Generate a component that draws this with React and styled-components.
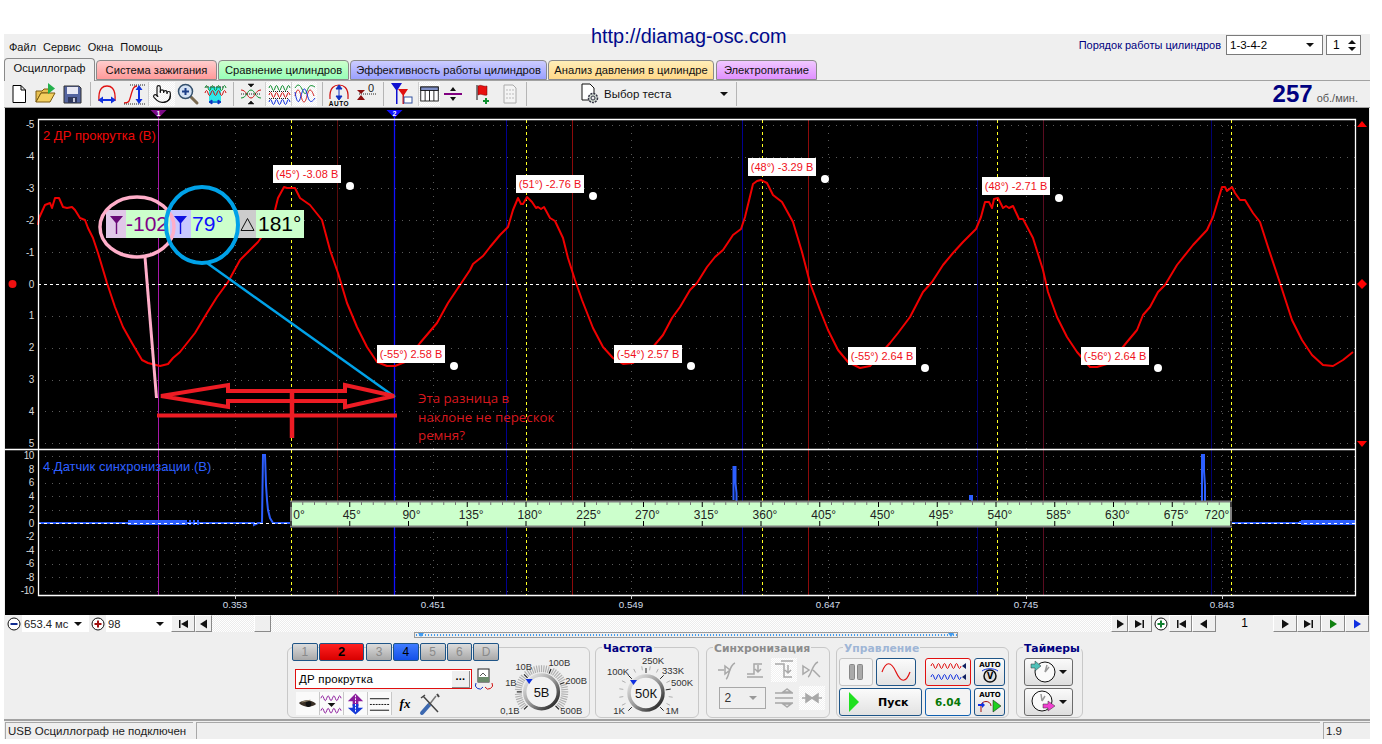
import React from 'react';
import styled, { createGlobalStyle } from 'styled-components';
import { Pointer } from 'lucide-react';

const GlobalStyle = createGlobalStyle`
  html, body {
    margin: 0;
    padding: 0;
    background: #fff;
  }
  body {
    font-family: "Liberation Sans", Arial, sans-serif;
    font-size: 12px;
    color: #000;
    overflow: hidden;
  }
`;

const FRAME = '#a2a2a2';
const NAVY = '#000080';
const BTN_EDGE = '#1f5587';

const Page = styled.div`
  position: relative;
  width: 1382px;
  height: 744px;
`;

const Url = styled.div`
  position: absolute;
  left: 591px;
  top: 24px;
  font-size: 19.9px;
  line-height: 24px;
  color: #000a8c;
  white-space: nowrap;
`;

const Window = styled.div`
  position: absolute;
  left: 4px;
  top: 34px;
  width: 1366px;
  height: 705px;
  background: #efefef;
  display: flex;
  flex-direction: column;
`;

const TopRow = styled.div`
  display: flex;
  justify-content: space-between;
  height: 24px;
  padding: 1px 9px 0 5px;
  box-sizing: border-box;
`;

const Menu = styled.div`
  display: flex;
  gap: 7px;
  padding-top: 6px;
  font-size: 11px;
  line-height: 13px;
  color: #111;
`;

const OrderBox = styled.div`
  display: flex;
  align-items: flex-start;
`;

const OrderLabel = styled.span`
  color: ${NAVY};
  font-size: 11px;
  line-height: 21px;
  margin-right: 5px;
`;

const SelectBox = styled.div`
  width: 97px;
  height: 20px;
  background: #fff;
  border: 1px solid #7a7a7a;
  display: flex;
  align-items: center;
  justify-content: space-between;
  padding: 0 8px 0 3px;
  box-sizing: border-box;
  font-size: 11.5px;
`;

const Spinner = styled(SelectBox)`
  width: 35px;
  margin-left: 3px;
  padding: 0 4px 0 6px;
  font-size: 12px;
`;

const Caret = styled.i`
  display: block;
  width: 0;
  height: 0;
  border-left: 4px solid transparent;
  border-right: 4px solid transparent;
  border-top: 4px solid #111;
`;

const SpinArrows = styled.div`
  display: flex;
  flex-direction: column;
  gap: 3px;
  i:first-child {
    transform: rotate(180deg);
  }
`;

const TabRow = styled.div`
  display: flex;
  height: 22px;
  align-items: flex-end;
  position: relative;
  z-index: 1;
`;

const Tab = styled.div`
  height: ${p => (p.$active ? 23 : 20)}px;
  width: ${p => p.$w}px;
  margin-right: ${p => p.$gap || 1}px;
  margin-bottom: ${p => (p.$active ? -1 : 0)}px;
  box-sizing: border-box;
  border: 1px solid #8a8a8a;
  border-bottom: ${p => (p.$active ? 'none' : '1px solid #8a8a8a')};
  border-radius: 4px 4px 0 0;
  background: ${p => (p.$active ? '#efefef' : `linear-gradient(${p.$from}, ${p.$to})`)};
  text-align: center;
  font-size: 11.2px;
  line-height: ${p => (p.$active ? 19 : 18)}px;
  color: #111;
  white-space: nowrap;
`;

const Toolbar = styled.div`
  display: flex;
  align-items: center;
  height: 28px;
  box-sizing: border-box;
  border-top: 1px solid ${FRAME};
  border-bottom: 1px solid ${FRAME};
  padding: 0 0 0 1px;
`;

const ToolButton = styled.div`
  width: ${p => p.$w}px;
  height: 24px;
  flex: none;
  display: flex;
  align-items: center;
  justify-content: center;
  background: ${p => (p.$on ? 'repeating-conic-gradient(#fff 0 25%, #f1f1f1 0 50%) 0 0/2px 2px' : 'transparent')};
  border-left: ${p => (p.$on && !p.$bare ? '1px solid #cfcfcf' : 'none')};
  box-sizing: border-box;
`;

const Sep = styled.div`
  width: ${p => p.$w}px;
  height: 24px;
  flex: none;
  display: flex;
  justify-content: center;
  &::after {
    content: '';
    width: 1px;
    background: #b5b5b5;
  }
`;

const TestSelect = styled.div`
  width: 207px;
  height: 24px;
  flex: none;
  display: flex;
  align-items: center;
  box-sizing: border-box;
  padding: 0 8px 0 50px;
  border-right: 1px solid #b5b5b5;
  font-size: 11.5px;
  color: #111;
  span {
    margin-left: 4px;
    flex: 1;
  }
`;

const Rpm = styled.div`
  margin-left: auto;
  padding-right: 12px;
  display: flex;
  align-items: baseline;
  color: #555;
  font-size: 11px;
  b {
    color: ${NAVY};
    font-size: 24px;
    line-height: 26px;
    margin-right: 4px;
  }
`;

const Scope = styled.div`
  position: relative;
  height: 507px;
  margin: 0 1px;
  background: #000;
  svg {
    display: block;
  }
`;

const Overlay = styled.svg`
  position: absolute;
  left: 0;
  top: 0;
  pointer-events: none;
`;

const ValueTag = styled.div.attrs(p => ({ style: { left: p.$x - 5, top: p.$y - 108 } }))`
  position: absolute;
  width: 68px;
  height: 18px;
  background: #fff;
  color: #f01020;
  font-size: 11px;
  line-height: 18px;
  text-align: center;
  white-space: nowrap;
`;

const Dot = styled.i.attrs(p => ({ style: { left: p.$x - 9, top: p.$y - 112 } }))`
  position: absolute;
  width: 8px;
  height: 8px;
  border-radius: 50%;
  background: #fff;
`;

const Readout = styled.div`
  position: absolute;
  left: 101px;
  top: 102px;
  height: 28px;
  display: flex;
  font-size: 21px;
  line-height: 27px;
`;

const ReadIcon = styled.div`
  width: ${p => p.$w}px;
  background: ${p => p.$bg};
  display: flex;
  align-items: center;
  justify-content: center;
`;

const ReadValue = styled.div`
  width: ${p => p.$w}px;
  box-sizing: border-box;
  padding-left: ${p => p.$pl || 0}px;
  background: #ccffcc;
  color: ${p => p.$c};
  overflow: hidden;
  white-space: nowrap;
`;

const Note = styled.div`
  position: absolute;
  left: 413px;
  top: 281px;
  color: #d8181f;
  font-family: "Open Sans", sans-serif;
  font-size: 13.3px;
  line-height: 18.5px;
  white-space: nowrap;
`;

const ScrollRow = styled.div`
  display: flex;
  height: 17px;
  margin: 0 1px;
`;

const RoundBtn = styled.div`
  width: 17px;
  height: 17px;
  flex: none;
  background: #efefef;
  display: flex;
  align-items: center;
  justify-content: center;
`;

const ZoomSelect = styled.div`
  width: ${p => p.$w}px;
  flex: none;
  background: #fff;
  display: flex;
  align-items: center;
  justify-content: space-between;
  padding: 0 7px 0 2px;
  box-sizing: border-box;
  font-size: 11.2px;
  color: #222;
`;

const StepBtn = styled.div`
  width: ${p => p.$w}px;
  height: 17px;
  flex: none;
  box-sizing: border-box;
  background: #efefef;
  border-top: 1px solid #fff;
  border-left: 1px solid #fff;
  border-right: 1px solid #8a8a8a;
  border-bottom: 1px solid #8a8a8a;
  display: flex;
  align-items: center;
  justify-content: center;
`;

const Track = styled.div`
  flex: 1;
  padding-left: 42px;
  background: repeating-conic-gradient(#fff 0 25%, #ececec 0 50%) 0 0/2px 2px;
`;

const Thumb = styled(StepBtn)`
  width: 17px;
`;

const PageBox = styled.div`
  width: 57px;
  flex: none;
  background: #efefef;
  text-align: center;
  font-size: 12px;
  line-height: 17px;
`;

const RangeBar = styled.div`
  margin-left: 410px;
  width: 544px;
  height: 6px;
  box-sizing: border-box;
  border: 1px solid #9a9a9a;
  display: flex;
  align-items: center;
  justify-content: space-between;
  padding: 0 3px;
  background-image: radial-gradient(#3f9bf0 40%, transparent 45%);
  background-size: 3px 2px;
  background-position: 0 1px;
  background-repeat: repeat-x;
  i {
    border-left: 3px solid transparent;
    border-right: 3px solid transparent;
    border-top: 4px solid #3f9bf0;
  }
`;

const Controls = styled.div`
  display: flex;
  align-items: flex-start;
  height: 81px;
  padding: 9px 0 0 283px;
  box-sizing: border-box;
`;

const Group = styled.div`
  position: relative;
  width: ${p => p.$w}px;
  height: 71px;
  margin-left: ${p => p.$ml || 0}px;
  flex: none;
  box-sizing: border-box;
  border: 1px solid #c8c8c8;
  border-radius: 6px;
  display: flex;
`;

const GroupTitle = styled.div`
  position: absolute;
  left: 6px;
  top: -6px;
  padding: 0 1px;
  background: #efefef;
  color: ${p => p.$c};
  font-family: "DejaVu Sans", sans-serif;
  font-weight: 700;
  font-size: 10.8px;
  line-height: 14px;
  white-space: nowrap;
`;

const ChannelCol = styled.div`
  width: 211px;
  flex: none;
  margin-top: -5px;
  padding-left: 4px;
  box-sizing: border-box;
`;

const ChannelRow = styled.div`
  display: flex;
  gap: 1px;
`;

const ChannelBtn = styled.div`
  width: ${p => (p.$wide ? 46 : 26)}px;
  height: 18px;
  box-sizing: border-box;
  border: 1px solid ${BTN_EDGE};
  border-radius: 2px;
  margin-right: ${p => (p.$wide ? 1 : 0)}px;
  background: ${p =>
    p.$tone === 'red'
      ? 'linear-gradient(#ff2020, #d80000)'
      : p.$tone === 'blue'
        ? 'linear-gradient(#3f7bff, #1450e8)'
        : 'linear-gradient(#dcdcdc, #a8a8a8)'};
  color: ${p => (p.$tone ? '#000' : '#8a8a8a')};
  font-weight: ${p => (p.$tone === 'red' ? 700 : 400)};
  font-size: ${p => (p.$tone === 'red' ? 13 : 12)}px;
  line-height: 16px;
  text-align: center;
`;

const NameRow = styled.div`
  display: flex;
  align-items: center;
  gap: 3px;
  margin-top: 7px;
  margin-left: 3px;
`;

const NameField = styled.div`
  width: 177px;
  height: 20px;
  box-sizing: border-box;
  background: #fff;
  border: 1px solid #e01010;
  display: flex;
  align-items: center;
  justify-content: space-between;
  padding: 0 1px 0 3px;
  font-size: 11.5px;
  letter-spacing: 0.2px;
`;

const DotsBtn = styled.div`
  width: 17px;
  height: 16px;
  background: #efefef;
  border-right: 1px solid #8a8a8a;
  border-bottom: 1px solid #8a8a8a;
  text-align: center;
  font-weight: 700;
  font-size: 11px;
  line-height: 11px;
`;

const SmallTools = styled.div`
  display: flex;
  margin: 2px 0 0 4px;
`;

const SmallTool = styled.div`
  width: ${p => p.$w || 24}px;
  height: 23px;
  box-sizing: border-box;
  display: flex;
  align-items: center;
  justify-content: center;
  background: ${p => (p.$plain ? 'transparent' : '#fafafa')};
  border-right: ${p => (p.$plain ? 'none' : '1px solid #c8c8c8')};
  font-family: "Liberation Serif", serif;
  font-style: italic;
  font-weight: 700;
  font-size: 13px;
`;

const SyncGrid = styled.div`
  display: grid;
  grid-template-columns: repeat(4, 28px);
  grid-auto-rows: 28px;
  padding: 8px 0 0 7px;
  align-items: center;
  justify-items: center;
`;

const SyncSelect = styled.div`
  grid-column: span 2;
  width: 47px;
  height: 22px;
  box-sizing: border-box;
  border: 1px solid #a8a8a8;
  display: flex;
  align-items: center;
  justify-content: space-between;
  padding: 0 8px 0 5px;
  font-size: 12px;
  color: #333;
  i {
    border-top-color: #999;
  }
`;

const CtlGrid = styled.div`
  display: grid;
  grid-template-columns: 34px 43px 9px 46px 34px;
  grid-template-rows: 28px 28px;
  row-gap: 2px;
  padding: 10px 0 0 2px;
`;

const CtlBtn = styled.div`
  grid-column: ${p => p.$col};
  grid-row: ${p => p.$row};
  margin-left: ${p => p.$ml || 0}px;
  margin-right: ${p => p.$mr || 0}px;
  box-sizing: border-box;
  border: 1px solid ${p => p.$edge || BTN_EDGE};
  border-radius: 3px;
  background: ${p => (p.$flat ? '#f4f4f4' : 'linear-gradient(#fbfbfb, #e2e2e2)')};
  color: ${p => p.$ink || '#000'};
  display: flex;
  align-items: center;
  justify-content: center;
  font-family: "DejaVu Sans", sans-serif;
  font-weight: 700;
  font-size: 10.5px;
`;

const StartBtn = styled(CtlBtn)`
  justify-content: flex-start;
  padding-left: 9px;
  font-size: 11px;
  svg {
    flex: none;
  }
  span {
    margin-left: 19px;
  }
`;

const TimerCol = styled.div`
  display: flex;
  flex-direction: column;
  gap: 2px;
  padding: 10px 0 0 7px;
`;

const TimerBtn = styled.div`
  width: 49px;
  height: 28px;
  box-sizing: border-box;
  border: 1px solid #6c6c6c;
  border-radius: 3px;
  background: linear-gradient(#fafafa, #dedede);
  display: flex;
  align-items: center;
  justify-content: space-between;
  padding: 0 5px 0 5px;
`;

const Divider = styled.div`
  height: 2px;
  background: #a2a2a2;
`;

const StatusBar = styled.div`
  display: flex;
  height: 17px;
  margin-top: 1px;
  gap: 3px;
`;

const StatusCell = styled.div`
  width: ${p => p.$w}px;
  margin-left: ${p => p.$ml || 0}px;
  flex: ${p => (p.$w ? 'none' : 1)};
  box-sizing: border-box;
  border-top: 1px solid #a8a8a8;
  border-left: 1px solid #a8a8a8;
  padding-left: 2px;
  font-size: 11.5px;
  line-height: 16px;
  color: #222;
  white-space: nowrap;
`;

/* ---------- chart data ---------- */

const CURVE = [
  [38, 225], [39, 218], [45, 205], [50, 203], [52, 208], [55, 198], [59, 198], [63, 207], [67, 208], [72, 207], [75, 210],
  [80, 218], [85, 220], [88, 228], [93, 238], [98, 253], [107, 283], [115, 307], [123, 327], [132, 343], [142, 360], [148, 363],
  [160, 366], [168, 364], [173, 358], [180, 352], [195, 333], [207, 313], [217, 297], [228, 282], [240, 260], [248, 252],
  [258, 242], [268, 228], [275, 210], [278, 198], [284, 187], [287, 188], [291, 188], [295, 188], [300, 198], [310, 205],
  [322, 220], [330, 250], [338, 273], [347, 303], [357, 327], [367, 347], [377, 362], [387, 366], [395, 366], [405, 362],
  [420, 343], [437, 323], [448, 303], [460, 285], [470, 270], [473, 264], [483, 256], [490, 247], [500, 235], [508, 227],
  [513, 210], [518, 198], [521, 204], [523, 204], [527, 197], [532, 202], [536, 208], [538, 207], [541, 209], [544, 207],
  [550, 218], [555, 221], [563, 238], [568, 258], [575, 280], [582, 300], [593, 328], [603, 347], [613, 358], [623, 364],
  [633, 363], [653, 347], [663, 335], [672, 318], [680, 307], [690, 290], [697, 283], [707, 267], [715, 257], [723, 250],
  [733, 235], [741, 229], [745, 217], [753, 184], [757, 181], [761, 180], [767, 183], [773, 195], [782, 202], [793, 222],
  [802, 252], [810, 283], [820, 310], [828, 330], [838, 350], [848, 362], [860, 368], [870, 366], [890, 343], [898, 333],
  [910, 317], [923, 292], [932, 282], [943, 265], [953, 253], [963, 242], [976, 229], [981, 217], [985, 202], [989, 202],
  [992, 208], [994, 199], [998, 198], [1003, 208], [1006, 206], [1009, 208], [1013, 206], [1019, 219], [1023, 219], [1033, 238],
  [1043, 270], [1048, 292], [1057, 317], [1067, 337], [1077, 352], [1090, 367], [1097, 367], [1110, 363], [1127, 342],
  [1137, 330], [1143, 315], [1150, 307], [1158, 292], [1165, 285], [1177, 265], [1193, 245], [1207, 230], [1213, 217],
  [1222, 187], [1225, 187], [1227, 191], [1232, 187], [1235, 193], [1240, 200], [1245, 200], [1253, 213], [1260, 222],
  [1268, 247], [1280, 283], [1292, 320], [1302, 340], [1312, 355], [1323, 365], [1333, 366], [1343, 360], [1353, 352],
];

const TAGS = [
  { x: 273, y: 165, text: '(45°) -3.08 В', dx: 350, dy: 186 },
  { x: 377, y: 345, text: '(-55°) 2.58 В', dx: 454, dy: 366 },
  { x: 516, y: 175, text: '(51°) -2.76 В', dx: 593, dy: 196 },
  { x: 614, y: 345, text: '(-54°) 2.57 В', dx: 691, dy: 366 },
  { x: 748, y: 158, text: '(48°) -3.29 В', dx: 825, dy: 179 },
  { x: 848, y: 347, text: '(-55°) 2.64 В', dx: 925, dy: 368 },
  { x: 982, y: 177, text: '(48°) -2.71 В', dx: 1059, dy: 198 },
  { x: 1081, y: 347, text: '(-56°) 2.64 В', dx: 1158, dy: 368 },
];

const GRID_X = [235, 433, 631, 828, 1026, 1222];
const GRID_LABELS = ['0.353', '0.451', '0.549', '0.647', '0.745', '0.843'];
const YELLOW = [291, 526, 762, 997, 1231];
const DARK_RED = [[337, '#5a0c0c'], [572, '#8c0a0a'], [808, '#8c0a0a'], [1043, '#5a0c20']];
const DARK_BLUE = [[506, '#000090'], [742, '#000090'], [977, '#000070'], [1211, '#000070']];
const UPPER = [-5, -4, -3, -2, -1, 0, 1, 2, 3, 4, 5];
const LOWER = [10, 8, 6, 4, 2, 0, -2, -4, -6, -8, -10];
const upperY = v => 284 + v * 31.85;
const lowerY = v => 523 - v * 6.75;

const SPIKES = 'M38 523H254l0 2l4-2h4l1-68h2l1 30l1 15l1 10l2 8l3 5H291M1231 523H1300V522H1355M733.500 500V467h2v16l1 10v8M970 500V496h2v5M1202 501V455h2v16l1 15v15';

const Wave = () => (
  <path
    d={CURVE.map((p, i) => `${i ? 'L' : 'M'}${p[0]} ${p[1]}`).join('')}
    fill="none"
    stroke="#f00000"
    strokeWidth="2"
    strokeLinejoin="round"
  />
);

const Ruler = () => {
  const ticks = [];
  for (let d = 0; d <= 720; d += 9) {
    const x = 291 + (d * 940) / 720;
    const major = d % 45 === 0;
    ticks.push(<path key={d} d={`M${x} 502v${major ? 5 : 3}${major ? `M${x} 526v-5` : ''}`} stroke={major ? '#000' : '#777'} strokeWidth="1" />);
  }
  const labels = [];
  for (let i = 0; i <= 16; i++) {
    const x = 291 + i * 58.75;
    const lx = i === 0 ? 299 : i === 16 ? 1217 : x + 1 + Math.min(3, i);
    labels.push(
      <text key={i} x={lx} y="519" textAnchor="middle" fontSize="12" fill="#222">{`${i * 45}°`}</text>,
    );
  }
  return (
    <g>
      <rect x="291" y="501.500" width="940" height="25" fill="#ccffcc" stroke="#808080" strokeWidth="2" />
      {ticks}
      {labels}
    </g>
  );
};

const Flag = ({ x, fill, n }) => (
  <g>
    <path d={`M${x - 8} 110h16l-8 8z`} fill={fill} />
    <text x={x} y="116" textAnchor="middle" fontSize="7" fontWeight="700" fill="#fff">{n}</text>
  </g>
);

const AxisLabel = ({ y, v }) => (
  <text x="34" y={y + 3.5} textAnchor="end" fontSize="10" letterSpacing="-0.4" fill="#d8d8d8">{v}</text>
);

const Chart = () => (
  <svg width="1364" height="507" viewBox="5 108 1364 507">
    <g stroke="#5a5a5a" strokeWidth="1" strokeDasharray="1 6">
      {UPPER.filter(v => v !== 0).map(v => <path key={v} d={`M38 ${Math.round(upperY(v)) + 0.5}H1355`} />)}
      {LOWER.filter(v => v !== 0).map(v => <path key={v} d={`M38 ${Math.round(lowerY(v)) + 0.5}H1355`} />)}
      {GRID_X.map(x => <path key={x} d={`M${x + 0.5} 119V595`} />)}
    </g>
    {DARK_RED.map(([x, c]) => <path key={x} d={`M${x + 0.5} 120V595`} stroke={c} />)}
    {DARK_BLUE.map(([x, c]) => <path key={x} d={`M${x + 0.5} 120V595`} stroke={c} />)}
    {YELLOW.map(x => <path key={x} d={`M${x + 0.5} 120V595`} stroke="#ffff20" strokeDasharray="3 3" />)}
    <path d="M158.500 112V595" stroke="#a818a8" />
    <path d="M394.500 112V595" stroke="#1010ff" strokeWidth="1.300" />
    <Wave />
    <path d="M128 522.500H185" stroke="#2d5fff" strokeWidth="5" fill="none" />
    <path d="M185 522.500H200" stroke="#2d5fff" strokeWidth="5" strokeDasharray="2 2" fill="none" />
    <path d={SPIKES} stroke="#2d5fff" strokeWidth="2" fill="none" />
    <path d="M1301 522.500H1355" stroke="#2d5fff" strokeWidth="5" />
    <path d="M38 284.500H1355" stroke="#fff" strokeWidth="1" strokeDasharray="3 3" />
    <path d="M38 523.500H1355" stroke="#fff" strokeWidth="1" strokeDasharray="3 3" />
    <Ruler />
    <path d="M38.500 119.500H1355.500V595.500H38.500Z" fill="none" stroke="#fff" strokeWidth="1.300" />
    <path d="M5 449.500H1355" stroke="#fff" strokeWidth="1.300" />
    {UPPER.map(v => <AxisLabel key={v} y={upperY(v)} v={v} />)}
    {LOWER.map(v => <AxisLabel key={v} y={lowerY(v)} v={v} />)}
    {GRID_X.map((x, i) => (
      <g key={x}>
        <path d={`M${x + 0.5} 595v4`} stroke="#ccc" />
        <text x={x} y="608" textAnchor="middle" fontSize="9.800" fill="#d0dce8">{GRID_LABELS[i]}</text>
      </g>
    ))}
    <text x="43" y="140" fontSize="13" fill="#f00808">2 ДР прокрутка (В)</text>
    <text x="43" y="471" fontSize="13" fill="#2d5fff">4 Датчик синхронизации (В)</text>
    <Flag x={158.5} fill="#7c0a86" n="1" />
    <Flag x={394.5} fill="#1010ff" n="2" />
    <circle cx="12.500" cy="284" r="4" fill="#f01010" />
    <path d="M1357 127l5-6 5 6z" fill="#f00" />
    <path d="M1362 279l5 5-5 5-5-5z" fill="#f00" />
    <path d="M1357 441l5 6 5-6z" fill="#f00" />
  </svg>
);

const Annotations = () => (
  <Overlay width="1364" height="507" viewBox="5 108 1364 507">
    <ellipse cx="137" cy="227" rx="37" ry="30" fill="none" stroke="#ffaec9" strokeWidth="3.500" />
    <ellipse cx="202" cy="225" rx="36" ry="38" fill="none" stroke="#00a2e8" strokeWidth="4" />
    <path d="M145 257L156.500 398" stroke="#ffaec9" strokeWidth="3" />
    <path d="M207 263L395 397" stroke="#00a2e8" strokeWidth="2.500" />
    <path d="M161 396L228 385V391H345V385L394 396L345 407V401H228V407Z" fill="none" stroke="#ed1c24" strokeWidth="4" strokeLinejoin="miter" />
    <path d="M157 415.500H397" stroke="#ed1c24" strokeWidth="4" />
    <path d="M292 391V438" stroke="#ed1c24" strokeWidth="4.500" />
  </Overlay>
);

/* ---------- icons ---------- */

const Ico = ({ w = 24, h = 24, children }) => (
  <svg width={w} height={h} viewBox={`0 0 ${w} ${h}`}>{children}</svg>
);

const ZIG = (x, y, n, c) => {
  let d = `M${x} ${y}`;
  for (let i = 0; i < n; i++) d += `q1.500 ${i % 2 ? 5 : -5} 3 0`;
  return <path d={d} fill="none" stroke={c} strokeWidth="1" />;
};

const NewIcon = () => (
  <Ico><path d="M6 3.500h8l4.500 4.500V20.500H6Z M14 3.500V8h4.500" fill="#fff" stroke="#000" /></Ico>
);
const OpenIcon = () => (
  <Ico>
    <path d="M3 9h6l2-2h5v4H8L3 20Z" fill="#e8c050" stroke="#7a5a10" />
    <path d="M3 20l5-9h14l-5 9Z" fill="#f4d060" stroke="#7a5a10" />
    <path d="M15 1l7 5.500-7 5.500Z" fill="#24b04c" />
  </Ico>
);
const SaveIcon = () => (
  <Ico>
    <path d="M4 4h15l2 2v15H4Z" fill="#5464a0" stroke="#333" />
    <rect x="7" y="5" width="11" height="7" fill="#e8e8f4" />
    <rect x="8" y="15" width="9" height="6" fill="#30385c" />
    <rect x="13" y="16" width="2" height="4" fill="#c8c8d8" />
  </Ico>
);
const ArchIcon = () => (
  <Ico>
    <path d="M4 19C3 5 9 4 12 4s9 1 8 15" fill="none" stroke="#e01010" strokeWidth="1.300" />
    <path d="M7 18H17" stroke="#1030e0" strokeWidth="2" />
    <path d="M3 18l5-3.500v7ZM21 18l-5-3.500v7Z" fill="#1030e0" />
  </Ico>
);
const StepIcon = () => (
  <Ico>
    <path d="M2 21c5 0 5-1 7-8s3-9 6-9" fill="none" stroke="#e01010" strokeWidth="1.300" />
    <path d="M8 3H23M2 22H23" stroke="#222" strokeDasharray="1 1" />
    <path d="M17 8V17" stroke="#1030e0" strokeWidth="2" />
    <path d="M17 3l-3.500 5h7ZM17 22l-3.500-5h7Z" fill="#1030e0" />
  </Ico>
);
const LensIcon = () => (
  <Ico>
    <path d="M14 14l7 7" stroke="#7a6a50" strokeWidth="3" strokeLinecap="round" />
    <circle cx="9.500" cy="9.500" r="7" fill="#d4e2f4" stroke="#34506c" strokeWidth="1.500" />
    <path d="M9.500 6v7M6 9.500h7" stroke="#1c3f88" strokeWidth="2" />
  </Ico>
);
const CyanIcon = () => (
  <Ico>
    <rect x="6" y="5" width="12" height="16" fill="#2ce8e8" />
    {ZIG(2, 6, 7, '#109030')}
    {ZIG(2, 11, 7, '#d01010')}
    <path d="M3 5H21" stroke="#222" strokeDasharray="1 1" />
    <path d="M8 20h8M6 20l3-2v4ZM18 20l-3-2v4Z" stroke="#1030c0" fill="#1030c0" strokeWidth="1" />
  </Ico>
);
const CrossIcon = () => (
  <Ico>
    <path d="M2 8c6 0 6 8 10 8s4-8 10-8" fill="none" stroke="#d01010" />
    <path d="M2 16c6 0 6-8 10-8s4 8 10 8" fill="none" stroke="#109030" />
    <path d="M2 12H22" stroke="#222" strokeDasharray="1 1" />
    <path d="M12 2v3M9 2h6l-3 3ZM12 22v-3M9 22h6l-3-3Z" fill="#111" stroke="#111" strokeWidth="0.500" />
  </Ico>
);
const WavesIcon = () => (
  <Ico>
    {ZIG(2, 6, 7, '#109030')}
    {ZIG(2, 13, 7, '#d01010')}
    {ZIG(2, 20, 7, '#1030e0')}
    <path d="M2 9.500H22M2 16.500H22" stroke="#222" strokeDasharray="1 1" />
  </Ico>
);
const MixIcon = () => (
  <Ico>
    <path d="M2 6c3-5 5-3 7 1s3 7 5 2 3-7 8-4" fill="none" stroke="#109030" />
    <path d="M2 14c2-8 4-8 6 0s4 8 6 0 4-8 7 0" fill="none" stroke="#d01010" />
    <path d="M2 10c2 12 4 12 6 4s4-10 6-2 4 10 8 4" fill="none" stroke="#1030e0" />
  </Ico>
);
const AutoArchIcon = () => (
  <Ico>
    <path d="M3 17C2 5 8 3 12 3s10 2 9 14" fill="none" stroke="#d01010" strokeWidth="1.200" />
    <path d="M12 6V15M12 3l-3 4h6ZM12 18l-3-4h6Z" stroke="#1030c0" fill="#1030c0" strokeWidth="1" />
    <text x="12" y="23.500" textAnchor="middle" fontSize="6.500" fontWeight="700" letterSpacing="0.500">AUTO</text>
  </Ico>
);
const ZeroIcon = () => (
  <Ico>
    <text x="17" y="10" textAnchor="middle" fontSize="11" fill="#222">0</text>
    <path d="M5 12h17" stroke="#222" strokeDasharray="1 1" />
    <path d="M3 8h8l-4 4ZM3 18h8l-4-5Z" fill="#8c1010" />
  </Ico>
);
const FunnelIcon = () => (
  <Ico>
    <path d="M1 1h11L7.500 8v14H6V8Z" fill="#1010d0" />
    <path d="M8 7h10l-4 6v9h-1.500v-9Z" fill="#e01010" />
    <rect x="14" y="15" width="8" height="6" fill="#fff" stroke="#3050a0" />
  </Ico>
);
const TableIcon = () => (
  <Ico>
    <rect x="2" y="4" width="20" height="16" fill="#fff" stroke="#111" />
    <rect x="2" y="4" width="20" height="4" fill="#8090c8" stroke="#111" />
    <path d="M7 8V20M12 8V20M17 8V20" stroke="#111" />
  </Ico>
);
const LevelIcon = () => (
  <Ico>
    <path d="M3 12H21" stroke="#800080" strokeWidth="2" />
    <path d="M12 5l-3 4h6ZM12 19l-3-4h6Z" fill="#111" />
  </Ico>
);
const MarkIcon = () => (
  <Ico>
    <path d="M7 3v15" stroke="#111" />
    <path d="M8 4c4-2 4 1 9 0v9c-4 1-5-2-9 0Z" fill="#e81010" stroke="#600" strokeWidth="0.500" />
    <path d="M13 19h6M16 16v6" stroke="#109030" strokeWidth="2" />
  </Ico>
);
const ListIcon = () => (
  <Ico>
    <path d="M6 3h9l3 3v15H6Z" fill="#f4f4f4" stroke="#aaa" />
    <path d="M8 8h8M8 12h8M8 16h8" stroke="#bbb" strokeDasharray="2 1" />
  </Ico>
);
const TestIcon = () => (
  <Ico w={20} h={22}>
    <path d="M2 1h8l4 4v12H2Z" fill="#fff" stroke="#111" />
    <circle cx="13" cy="15" r="4.500" fill="#cfd8cf" stroke="#334" strokeWidth="1.500" strokeDasharray="2 1" />
    <circle cx="13" cy="15" r="2" fill="#efefef" stroke="#334" />
  </Ico>
);
const TriIcon = ({ c }) => (
  <svg width="15" height="22" viewBox="0 0 15 22">
    <path d="M1 3h13L8.200 10V21H6.800V10Z" fill={c} />
  </svg>
);
const DeltaIcon = () => (
  <svg width="15" height="15" viewBox="0 0 15 15">
    <path d="M7.500 1.500L14 13.500H1Z" fill="none" stroke="#111" />
  </svg>
);
const RoundIcon = ({ c, plus }) => (
  <svg width="14" height="14" viewBox="0 0 14 14">
    <circle cx="7" cy="7" r="6" fill="#fff" stroke="#111" />
    <path d={plus ? 'M3.500 7h7M7 3.500v7' : 'M3.500 7h7'} stroke={c} strokeWidth="2" />
  </svg>
);
const Nav = ({ kind, c = '#111' }) => {
  const paths = {
    first: 'M1 1h1.500v8H1ZM10 1v8L3 5Z',
    prev: 'M8 0.500v9L1 5Z',
    next: 'M2 0.500v9l7-4.500Z',
    last: 'M0 1l7 4-7 4ZM7.500 1H9v8H7.500Z',
  };
  return (
    <svg width="10" height="10" viewBox="0 0 10 10"><path d={paths[kind]} fill={c} /></svg>
  );
};

const ScopeSwapIcon = () => (
  <Ico w={18} h={22}>
    <rect x="3" y="1" width="11" height="13" fill="#fff" stroke="#222" />
    <rect x="3" y="9" width="11" height="5" fill="#6a8a6a" />
    <path d="M5 8l3-3 3 3" fill="none" stroke="#555" />
    <path d="M1 15a4 4 0 0 0 7 4" fill="none" stroke="#1030c0" />
    <path d="M17 15a4 4 0 0 1-7 4" fill="none" stroke="#d01010" />
  </Ico>
);
const EyeIcon = () => (
  <Ico>
    <path d="M3 11c5-4 13-4 18 1-5 4-13 4-18-1Z" fill="#3a3026" />
    <circle cx="13" cy="12" r="3" fill="#111" />
    <path d="M6 10l9-2" stroke="#968a70" />
  </Ico>
);
const PurpleZigIcon = () => (
  <Ico>
    {ZIG(1, 6, 7, '#8b1a9c')}
    <path d="M8 11h8l-4 4Z" fill="#111" />
    {ZIG(1, 19, 7, '#8b1a9c')}
  </Ico>
);
const UpDownIcon = () => (
  <Ico>
    <path d="M12 1l8 8h-5v5H9V9H4Z" fill="#8b1a9c" />
    <path d="M9 12h6v4h5l-8 7-8-7h5Z" fill="#1438d8" />
    <path d="M12 3V21" stroke="#fff" strokeDasharray="2 1" />
  </Ico>
);
const LinesIcon = () => (
  <Ico>
    <path d="M2 6.500H22M2 18.500H22" stroke="#111" />
    <path d="M2 12.500H22" stroke="#111" strokeDasharray="2 1" />
  </Ico>
);
const WrenchIcon = () => (
  <Ico>
    <path d="M4 21l7-8" stroke="#3c68b0" strokeWidth="4" strokeLinecap="round" />
    <path d="M11 13l7-9" stroke="#777" strokeWidth="1.500" />
    <path d="M5 4l15 16M3 6l4-3" stroke="#444" strokeWidth="1.500" />
    <path d="M19 2l2 3" stroke="#444" strokeWidth="2" />
  </Ico>
);

const Knob = ({ w, cx, cy, label, labels, dense }) => {
  const marks = [];
  const total = dense ? 48 : 30;
  for (let i = 0; i <= total; i++) {
    const a = ((-135 + (i * 270) / total) * Math.PI) / 180;
    const major = labels.some(l => Math.abs(l.a - (-135 + (i * 270) / total)) < 3);
    if (!dense && !major && i % 2) continue;
    const r1 = major ? 20 : dense ? 20 : 23;
    const r2 = major ? 25 : 27;
    marks.push(
      <path
        key={i}
        d={`M${cx + r1 * Math.sin(a)} ${cy - r1 * Math.cos(a)}L${cx + r2 * Math.sin(a)} ${cy - r2 * Math.cos(a)}`}
        stroke={major ? '#222' : '#b0b0b0'}
        strokeWidth={dense ? 1.2 : 1}
      />,
    );
  }
  return (
    <svg width={w} height="69" viewBox={`0 0 ${w} 69`}>
      <defs>
        <linearGradient id={`ring${cx}`} x1="0" y1="0" x2="1" y2="1">
          <stop offset="0" stopColor="#f4f4f4" />
          <stop offset="0.500" stopColor="#999" />
          <stop offset="1" stopColor="#111" />
        </linearGradient>
      </defs>
      {marks}
      <circle cx={cx} cy={cy} r="17" fill="#f2f2f2" stroke={`url(#ring${cx})`} strokeWidth="3.500" />
      <path d={`M${cx - 16} ${cy - 13}h7l-3.500 5Z`} fill="#1030e0" />
      <text x={cx} y={cy + 5} textAnchor="middle" fontSize="13" fill="#111">{label}</text>
      {labels.map(l => (
        <text key={l.t} x={l.x} y={l.y} textAnchor="middle" fontSize="9.500" fill="#333">{l.t}</text>
      ))}
    </svg>
  );
};

const VOLT = [
  { t: '10В', x: 25, y: 22, a: -45 },
  { t: '100В', x: 61, y: 18, a: 25 },
  { t: '1В', x: 12, y: 38, a: -90 },
  { t: '200В', x: 78, y: 36, a: 70 },
  { t: '0,1В', x: 11, y: 66, a: -135 },
  { t: '500В', x: 73, y: 66, a: 135 },
];
const FREQ = [
  { t: '100K', x: 22, y: 27, a: -45 },
  { t: '250K', x: 57, y: 16, a: 0 },
  { t: '333K', x: 77, y: 26, a: 45 },
  { t: '500K', x: 86, y: 38, a: 80 },
  { t: '1K', x: 23, y: 66, a: -135 },
  { t: '1M', x: 76, y: 66, a: 135 },
];

const G = '#a8a8a8';
const SyncIcon = ({ d, c = G, fill = 'none', on }) => (
  <ToolButton $w={26} $on={on} $bare>
    <svg width="22" height="22" viewBox="0 0 22 22"><path d={d} fill={fill} stroke={c} strokeWidth="1.500" /></svg>
  </ToolButton>
);

const App = () => (
  <Page>
    <GlobalStyle />
    <Window>
      <TopRow>
        <Menu>
          <span>Файл</span>
          <span>Сервис</span>
          <span>Окна</span>
          <span>Помощь</span>
        </Menu>
        <OrderBox>
          <OrderLabel>Порядок работы цилиндров</OrderLabel>
          <SelectBox>1-3-4-2<Caret /></SelectBox>
          <Spinner>1<SpinArrows><Caret /><Caret /></SpinArrows></Spinner>
        </OrderBox>
      </TopRow>

      <TabRow>
        <Tab $active $w={91}>Осциллограф</Tab>
        <Tab $w={121} $from="#ffcccc" $to="#ff9a9a">Система зажигания</Tab>
        <Tab $w={131} $from="#ccffcc" $to="#98ffb8">Сравнение цилиндров</Tab>
        <Tab $w={197} $from="#ccccff" $to="#9aa0ff">Эффективность работы цилиндров</Tab>
        <Tab $w={166} $gap={2} $from="#ffeeb8" $to="#ffd888">Анализ давления в цилиндре</Tab>
        <Tab $w={101} $from="#f0c8ff" $to="#e090ff">Электропитание</Tab>
      </TabRow>

      <Toolbar>
        <ToolButton $w={27}><NewIcon /></ToolButton>
        <ToolButton $w={26}><OpenIcon /></ToolButton>
        <ToolButton $w={28}><SaveIcon /></ToolButton>
        <Sep $w={8} />
        <ToolButton $w={26}><ArchIcon /></ToolButton>
        <ToolButton $w={28}><StepIcon /></ToolButton>
        <ToolButton $w={27} $on><Pointer size={20} strokeWidth={1.4} color="#111" /></ToolButton>
        <ToolButton $w={26}><LensIcon /></ToolButton>
        <ToolButton $w={28}><CyanIcon /></ToolButton>
        <Sep $w={8} />
        <ToolButton $w={28}><CrossIcon /></ToolButton>
        <ToolButton $w={26} $on><WavesIcon /></ToolButton>
        <ToolButton $w={26} $on><MixIcon /></ToolButton>
        <Sep $w={10} />
        <ToolButton $w={24}><AutoArchIcon /></ToolButton>
        <ToolButton $w={30}><ZeroIcon /></ToolButton>
        <Sep $w={4} />
        <ToolButton $w={33}><FunnelIcon /></ToolButton>
        <ToolButton $w={22} $on><TableIcon /></ToolButton>
        <ToolButton $w={26}><LevelIcon /></ToolButton>
        <ToolButton $w={32}><MarkIcon /></ToolButton>
        <ToolButton $w={24}><ListIcon /></ToolButton>
        <Sep $w={8} />
        <TestSelect>
          <TestIcon />
          <span>Выбор теста</span>
          <Caret />
        </TestSelect>
        <Rpm><b>257</b>об./мин.</Rpm>
      </Toolbar>

      <Scope>
        <Chart />
        {TAGS.map(t => (
          <React.Fragment key={t.x}>
            <ValueTag $x={t.x} $y={t.y}>{t.text}</ValueTag>
            <Dot $x={t.dx} $y={t.dy} />
          </React.Fragment>
        ))}
        <Readout>
          <ReadIcon $w={20} $bg="#e0c8e8"><TriIcon c="#6a0a78" /></ReadIcon>
          <ReadValue $w={44} $c="#800088">-102</ReadValue>
          <ReadIcon $w={21} $bg="#c8c8ff"><TriIcon c="#1010e0" /></ReadIcon>
          <ReadValue $w={47} $c="#1010ff" $pl={1}>79°</ReadValue>
          <ReadIcon $w={18} $bg="#cccccc"><DeltaIcon /></ReadIcon>
          <ReadValue $w={48} $c="#000" $pl={2}>181°</ReadValue>
        </Readout>
        <Annotations />
        <Note>
          Эта разница в<br />наклоне не перескок<br />ремня?
        </Note>
      </Scope>

      <ScrollRow>
        <RoundBtn><RoundIcon c="#102c90" /></RoundBtn>
        <ZoomSelect $w={67}>653.4 мс<Caret /></ZoomSelect>
        <RoundBtn><RoundIcon c="#a01010" plus /></RoundBtn>
        <ZoomSelect $w={65}>98<Caret /></ZoomSelect>
        <StepBtn $w={24}><Nav kind="first" /></StepBtn>
        <StepBtn $w={17}><Nav kind="prev" /></StepBtn>
        <Track><Thumb $w={17} /></Track>
        <StepBtn $w={17}><Nav kind="next" /></StepBtn>
        <StepBtn $w={24}><Nav kind="last" /></StepBtn>
        <RoundBtn><RoundIcon c="#108030" plus /></RoundBtn>
        <StepBtn $w={23}><Nav kind="first" /></StepBtn>
        <StepBtn $w={24}><Nav kind="prev" /></StepBtn>
        <PageBox>1</PageBox>
        <StepBtn $w={24}><Nav kind="next" /></StepBtn>
        <StepBtn $w={24}><Nav kind="last" /></StepBtn>
        <StepBtn $w={24}><Nav kind="next" c="#108010" /></StepBtn>
        <StepBtn $w={24}><Nav kind="next" c="#1030e0" /></StepBtn>
      </ScrollRow>

      <RangeBar><i /><i /></RangeBar>

      <Controls>
        <Group $w={303}>
          <ChannelCol>
            <ChannelRow>
              <ChannelBtn>1</ChannelBtn>
              <ChannelBtn $wide $tone="red">2</ChannelBtn>
              <ChannelBtn>3</ChannelBtn>
              <ChannelBtn $tone="blue">4</ChannelBtn>
              <ChannelBtn>5</ChannelBtn>
              <ChannelBtn>6</ChannelBtn>
              <ChannelBtn>D</ChannelBtn>
            </ChannelRow>
            <NameRow>
              <NameField>ДР прокрутка<DotsBtn>...</DotsBtn></NameField>
              <ScopeSwapIcon />
            </NameRow>
            <SmallTools>
              <SmallTool><EyeIcon /></SmallTool>
              <SmallTool><PurpleZigIcon /></SmallTool>
              <SmallTool><UpDownIcon /></SmallTool>
              <SmallTool><LinesIcon /></SmallTool>
              <SmallTool $plain $w={26}>fx</SmallTool>
              <SmallTool $plain><WrenchIcon /></SmallTool>
            </SmallTools>
          </ChannelCol>
          <Knob w={91} cx={43} cy={44} label="5В" labels={VOLT} dense />
        </Group>

        <Group $w={104} $ml={5}>
          <GroupTitle $c={NAVY}>Частота</GroupTitle>
          <Knob w={102} cx={50} cy={45} label="50К" labels={FREQ} />
        </Group>

        <Group $w={124} $ml={7}>
          <GroupTitle $c="#8c8c8c">Синхронизация</GroupTitle>
          <SyncGrid>
            <SyncIcon d="M1 11h6M8 7l5 4-5 4ZM9 20c3-1 3-14 9-16" />
            <SyncIcon d="M2 15h7V5h8M13 12V6M10 10l3 3 3-3M2 18h16" />
            <SyncIcon on d="M2 5h9v13h8M15 6v8M12 11l3 3 3-3M8 2h12" />
            <SyncIcon d="M2 7l6 4-6 4ZM7 18c3-1 4-13 10-15M12 11l7 7" />
            <SyncSelect>2<Caret /></SyncSelect>
            <SyncIcon d="M2 6h18M2 11h18M2 16h18M14 2l-4 3h8ZM14 20l-4-3h8Z" />
            <SyncIcon on d="M1 11h4M21 11h-4M5 7l6 4-6 4ZM17 7l-6 4 6 4Z" fill={G} />
          </SyncGrid>
        </Group>

        <Group $w={173} $ml={6}>
          <GroupTitle $c="#9fb6d6">Управление</GroupTitle>
          <CtlGrid>
            <CtlBtn $col="1" $row="1" $edge="#c4c4c4" $flat>
              <svg width="16" height="18" viewBox="0 0 16 18">
                <rect x="1.500" y="1.500" width="5" height="15" rx="1" fill="#aaa" stroke="#888" />
                <rect x="9.500" y="1.500" width="5" height="15" rx="1" fill="#aaa" stroke="#888" />
              </svg>
            </CtlBtn>
            <CtlBtn $col="2" $row="1" $ml={3}>
              <svg width="30" height="22" viewBox="0 0 30 22">
                <path d="M1 11C5 0 10 0 15 11s10 11 14 0" fill="none" stroke="#e01010" strokeWidth="1.200" />
              </svg>
            </CtlBtn>
            <CtlBtn $col="4" $row="1" $edge="#e01010">
              <svg width="38" height="22" viewBox="0 0 38 22">
                {ZIG(2, 5, 10, '#e01010')}
                {ZIG(2, 16, 10, '#1030e0')}
                <path d="M37 2v6l-4-3ZM37 13v6l-4-3Z" fill="#102060" />
              </svg>
            </CtlBtn>
            <CtlBtn $col="5" $row="1" $ml={3}>
              <svg width="24" height="24" viewBox="0 0 24 24">
                <text x="12" y="7" textAnchor="middle" fontSize="7" fontWeight="700">AUTO</text>
                <path d="M4 11c4-3 12-3 16 0" fill="none" stroke="#1030e0" />
                <circle cx="12" cy="16" r="6" fill="#ddd" stroke="#111" strokeWidth="1.500" />
                <text x="12" y="19" textAnchor="middle" fontSize="8" fontWeight="700">V</text>
              </svg>
            </CtlBtn>
            <StartBtn $col="1 / 4" $row="2" $mr={3}>
              <svg width="10" height="20" viewBox="0 0 10 20"><path d="M0 0l10 10L0 20Z" fill="#20e020" /></svg>
              <span>Пуск</span>
            </StartBtn>
            <CtlBtn $col="4" $row="2" $edge="#1060b0" $ink="#087808" $flat>6.04</CtlBtn>
            <CtlBtn $col="5" $row="2" $ml={3}>
              <svg width="24" height="24" viewBox="0 0 24 24">
                <text x="12" y="7" textAnchor="middle" fontSize="7" fontWeight="700">AUTO</text>
                <path d="M3 22v-6c0-6 10-6 10 0" fill="none" stroke="#a01010" />
                <path d="M0 14h4v-2l3 3-3 3v-2H0Z" fill="#1030e0" />
                <path d="M15 10l8 6-8 6Z" fill="#20d020" stroke="#111" strokeWidth="0.500" />
              </svg>
            </CtlBtn>
          </CtlGrid>
        </Group>

        <Group $w={67} $ml={7}>
          <GroupTitle $c={NAVY}>Таймеры</GroupTitle>
          <TimerCol>
            <TimerBtn>
              <svg width="28" height="24" viewBox="0 0 28 24">
                <circle cx="15" cy="12" r="10" fill="#fafafa" stroke="#111" />
                <path d="M17 5l-2 7M15 12l4-5" stroke="#999" strokeWidth="1.500" />
                <path d="M1 4h4V1l6 5-6 5V8H1Z" fill="#50c0b8" stroke="#333" strokeWidth="0.500" />
              </svg>
              <Caret />
            </TimerBtn>
            <TimerBtn>
              <svg width="28" height="24" viewBox="0 0 28 24">
                <circle cx="12" cy="11" r="10" fill="#fafafa" stroke="#111" />
                <path d="M11 4l1 7M12 11l3-5" stroke="#999" strokeWidth="1.500" />
                <path d="M13 14h5v-3l7 5-7 5v-3h-5Z" fill="#f040d0" stroke="#333" strokeWidth="0.500" />
              </svg>
              <Caret />
            </TimerBtn>
          </TimerCol>
        </Group>
      </Controls>

      <Divider />
      <StatusBar>
        <StatusCell $w={188} $ml={1}>USB Осциллограф не подключен</StatusCell>
        <StatusCell />
        <StatusCell $w={47}>1.9</StatusCell>
      </StatusBar>
    </Window>
    <Url>http://diamag-osc.com</Url>
  </Page>
);

export default App;
